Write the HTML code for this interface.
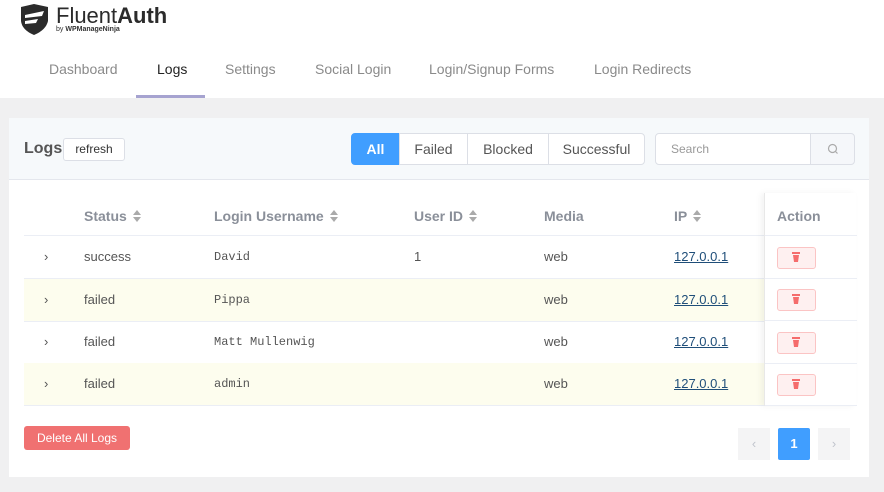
<!DOCTYPE html>
<html><head><meta charset="utf-8"><style>
*{box-sizing:border-box;margin:0;padding:0}
body{width:884px;height:492px;background:#f0f0f1;font-family:"Liberation Sans",sans-serif;position:relative;overflow:hidden;color:#606266}
.top{position:absolute;left:0;top:0;width:884px;height:98px;background:#fff}
.abs{position:absolute}
.nav{font-size:14px;color:#8a8a8a;top:61px}
.card{position:absolute;left:9px;top:118px;width:860px;height:359px;background:#fff}
.ch{position:absolute;left:0;top:0;width:860px;height:62px;background:#f6f9fb;border-bottom:1px solid #e4e7ed}
.seg{position:absolute;top:15px;height:32px;border:1px solid #dcdfe6;background:#fff;font-size:14px;color:#555;text-align:center;line-height:30px}
.th{font-size:14px;font-weight:bold;color:#8a8f99;top:208px}
.row{position:absolute;left:24px;width:832px;height:43px;border-bottom:1px solid #ebeef5}
.y{background:#fdfdee}
.c{position:absolute;font-size:13px;color:#555;line-height:42px}
.m{font-family:"Liberation Mono",monospace;font-size:12px}
.ip{color:#1f4e79;text-decoration:underline}
.del{position:absolute;left:753px;top:11px;width:39px;height:22px;border:1px solid #fbc4c4;background:#fef0f0;border-radius:3px}
.sort{display:inline-block;width:8px;height:12px;vertical-align:-1px;margin-left:6px;position:relative}
.sort:before{content:"";position:absolute;left:0;top:0;border:4px solid transparent;border-bottom:5px solid #aaa;border-top:0}
.sort:after{content:"";position:absolute;left:0;top:7px;border:4px solid transparent;border-top:5px solid #aaa;border-bottom:0}
</style></head><body>
<div class="top"></div>
<svg class="abs" style="left:19px;top:3px" width="31" height="33" viewBox="0 0 31 33"><path d="M2 4 L15 1 L29 4 L29 18 Q27 27 15 32 Q3 27 2 18 Z" fill="#2b2b2b"/><path d="M6 12 L25 8 L23 13 L6 15 Z M6 18 L19 16 L17 20 L6 21 Z" fill="#fff"/></svg>
<div class="abs" style="left:56px;top:3px;font-size:22px;color:#2b2b2b">Fluent<b>Auth</b></div>
<div class="abs" style="left:56px;top:26px;font-size:7px;color:#333">by <b>WPManageNinja</b></div>
<div class="abs nav" style="left:49px">Dashboard</div>
<div class="abs nav" style="left:157px;color:#222">Logs</div>
<div class="abs" style="left:136px;top:95px;width:69px;height:3px;background:#a6a3d0"></div>
<div class="abs nav" style="left:225px">Settings</div>
<div class="abs nav" style="left:315px">Social Login</div>
<div class="abs nav" style="left:429px">Login/Signup Forms</div>
<div class="abs nav" style="left:594px">Login Redirects</div>
<div class="card">
<div class="ch">
<div class="abs" style="left:15px;top:22px;font-size:16px;font-weight:bold;color:#555">Logs</div>
<div class="abs" style="left:54px;top:20px;width:62px;height:23px;border:1px solid #dcdfe6;background:#fff;font-size:12px;color:#333;text-align:center;line-height:21px;border-radius:3px">refresh</div>
<div class="seg" style="left:342px;width:49px;background:#409eff;border-color:#409eff;color:#fff;font-weight:bold;border-radius:4px 0 0 4px">All</div>
<div class="seg" style="left:390px;width:69px">Failed</div>
<div class="seg" style="left:458px;width:82px">Blocked</div>
<div class="seg" style="left:539px;width:97px;border-radius:0 4px 4px 0">Successful</div>
<div class="seg" style="left:646px;width:156px;text-align:left;padding-left:15px;font-size:12px;color:#999;border-radius:4px 0 0 4px">Search</div>
<div class="seg" style="left:801px;width:45px;background:#f5f7fa;border-radius:0 4px 4px 0"><svg width="12" height="12" viewBox="0 0 12 12" style="vertical-align:-1px"><circle cx="5.5" cy="5.5" r="4" fill="none" stroke="#aaa" stroke-width="1.2"/><path d="M8.5 8.5L10.5 10.5" stroke="#aaa" stroke-width="1.2"/></svg></div>
</div>
</div>
<div class="abs th" style="left:84px">Status<span class="sort"></span></div>
<div class="abs th" style="left:214px">Login Username<span class="sort"></span></div>
<div class="abs th" style="left:414px">User ID<span class="sort"></span></div>
<div class="abs th" style="left:544px">Media</div>
<div class="abs th" style="left:674px">IP<span class="sort"></span></div>
<div class="row" style="top:193px;height:43px"></div>
<div class="row" style="top:236px"><div class="c" style="left:20px">›</div><div class="c" style="left:60px">success</div><div class="c m" style="left:190px">David</div><div class="c" style="left:390px">1</div><div class="c" style="left:520px">web</div><div class="c ip" style="left:650px">127.0.0.1</div><div class="del"></div></div>
<div class="row y" style="top:279px"><div class="c" style="left:20px">›</div><div class="c" style="left:60px">failed</div><div class="c m" style="left:190px">Pippa</div><div class="c" style="left:520px">web</div><div class="c ip" style="left:650px">127.0.0.1</div><div class="del"></div></div>
<div class="row" style="top:321px"><div class="c" style="left:20px">›</div><div class="c" style="left:60px">failed</div><div class="c m" style="left:190px">Matt Mullenwig</div><div class="c" style="left:520px">web</div><div class="c ip" style="left:650px">127.0.0.1</div><div class="del"></div></div>
<div class="row y" style="top:363px"><div class="c" style="left:20px">›</div><div class="c" style="left:60px">failed</div><div class="c m" style="left:190px">admin</div><div class="c" style="left:520px">web</div><div class="c ip" style="left:650px">127.0.0.1</div><div class="del"></div></div>
<div class="abs" style="left:764px;top:193px;width:92px;height:213px;background:#fff;border-left:1px solid #e8e8e8;box-shadow:-3px 0 6px rgba(0,0,0,.05)">
<div style="position:absolute;left:0;top:42px;width:92px;border-top:1px solid #ebeef5"></div>
<div style="position:absolute;left:0;top:85px;width:92px;border-top:1px solid #ebeef5"></div>
<div style="position:absolute;left:0;top:127px;width:92px;border-top:1px solid #ebeef5"></div>
<div style="position:absolute;left:0;top:170px;width:92px;border-top:1px solid #ebeef5"></div>
<div style="position:absolute;left:0;top:212px;width:92px;border-top:1px solid #ebeef5"></div>
<div style="position:absolute;left:12px;top:15px;font-size:14px;font-weight:bold;color:#8a8f99">Action</div>
<div class="del" style="left:12px;top:54px"></div><div class="del" style="left:12px;top:96px"></div><div class="del" style="left:12px;top:139px"></div><div class="del" style="left:12px;top:181px"></div>
</div>
<svg class="abs" style="left:791px;top:252px" width="10" height="160" viewBox="0 0 10 160"><g fill="#f56c6c"><rect x="1" y="0" width="8" height="2"/><path d="M2 3H8L7 10H3Z"/><rect x="1" y="42" width="8" height="2"/><path d="M2 45H8L7 52H3Z"/><rect x="1" y="85" width="8" height="2"/><path d="M2 88H8L7 95H3Z"/><rect x="1" y="127" width="8" height="2"/><path d="M2 130H8L7 137H3Z"/></g></svg>
<div class="abs" style="left:24px;top:426px;width:106px;height:24px;background:#f07171;border-radius:3px;color:#fff;font-size:12px;text-align:center;line-height:24px">Delete All Logs</div>
<div class="abs" style="left:738px;top:428px;width:32px;height:32px;background:#f4f4f5;color:#c0c4cc;text-align:center;line-height:32px;font-size:13px">‹</div>
<div class="abs" style="left:778px;top:428px;width:32px;height:32px;background:#409eff;color:#fff;text-align:center;line-height:32px;font-size:13px;font-weight:bold;border-radius:2px">1</div>
<div class="abs" style="left:818px;top:428px;width:32px;height:32px;background:#f4f4f5;color:#c0c4cc;text-align:center;line-height:32px;font-size:13px">›</div>
</body></html>
